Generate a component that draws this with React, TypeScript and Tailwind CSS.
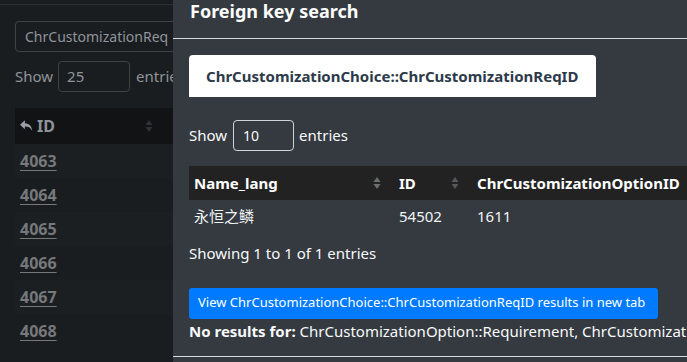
import React from "react";

const font = { fontFamily: '"Noto Sans", "Noto Sans CJK SC", sans-serif' };

function SortIcon({ className = "" }: { className?: string }) {
  return (
    <svg width="8" height="14" viewBox="0 0 8 14" className={className}>
      <path d="M4 1 L7.5 6 L0.5 6 Z" fill="currentColor" />
      <path d="M4 13 L7.5 8 L0.5 8 Z" fill="currentColor" />
    </svg>
  );
}

function ReplyIcon() {
  return (
    <svg width="13" height="12" viewBox="0 0 16 14" className="text-[#9aa0a6]">
      <path d="M6 0 L0 5.5 L6 11 L6 7.5 C10 7.5 13 8.5 15 13 C14.5 7.5 11.5 3.8 6 3.6 Z" fill="currentColor" />
    </svg>
  );
}

export default function App() {
  const rows = ["4063", "4064", "4065", "4066", "4067", "4068"];
  return (
    <div className="relative w-[687px] h-[362px] overflow-hidden bg-[#1a1d20] text-[#9a9fa5]" style={font}>
      {/* background page */}
      <div className="pt-[4px]">
        <div className="border-t border-[#2c3036]" />
        <div className="px-[15px] pt-[16px]">
          <div className="w-[300px] h-[31px] border border-[#3d4248] rounded-[4px] flex items-center px-[9px] text-[14px] text-[#8f949a]">
            ChrCustomizationReq
          </div>
          <div className="flex items-center mt-[9px] text-[15px] text-[#8f949a]">
            <span>Show</span>
            <div className="ml-[5px] w-[72px] h-[31px] border border-[#3d4248] rounded-[4px] flex items-center px-[8px]">25</div>
            <span className="ml-[6px]">entries</span>
          </div>
          <div className="mt-[16px]">
            <div className="h-[36px] bg-[#121315] flex items-center px-[5px]">
              <ReplyIcon />
              <span className="ml-[4px] font-bold text-[16px] text-[#8f949a]">ID</span>
              <SortIcon className="ml-[90px] text-[#2f3338]" />
            </div>
            {rows.map((r, i) => (
              <div key={r} className={`h-[34px] flex items-center px-[5px] ${i % 2 === 0 ? "bg-[#1c1f22]" : "bg-[#1a1d20]"}`}>
                <span className="font-bold text-[16px] text-[#76787b] underline underline-offset-[3px] decoration-[#76787b]">{r}</span>
              </div>
            ))}
            <div className="mt-[10px] text-[15px] text-[#8f949a] leading-[20px]">Showing 676 to 681 of 681 entries</div>
          </div>
        </div>
      </div>

      {/* modal */}
      <div className="absolute left-[173px] top-0 w-[560px] h-[362px] bg-[#343a40] text-[#f8f9fa]">
        <div className="h-[39px] border-b border-[#d6d8db] px-[17px] flex items-start">
          <h5 className="text-[18px] font-bold leading-[20px] mt-[1px] text-white">Foreign key search</h5>
        </div>
        <div className="px-[16px] pt-[16px]">
          <div className="inline-flex items-center h-[42px] w-[407px] px-[17px] bg-white rounded-t-[4px] text-[15px] font-bold text-[#2d3a4a] whitespace-nowrap">
            ChrCustomizationChoice::ChrCustomizationReqID
          </div>
          <div className="flex items-center mt-[23px] text-[15px]">
            <span>Show</span>
            <div className="ml-[6px] w-[61px] h-[31px] border border-[#d0d3d6] rounded-[4px] flex items-center px-[9px] text-[14px]">10</div>
            <span className="ml-[5px]">entries</span>
          </div>
          <div className="mt-[15px]">
            <div className="h-[34px] bg-[#222222] flex items-center text-[15px] font-bold text-white">
              <div className="w-[210px] pl-[5px] flex items-center justify-between pr-[18px]">
                <span>Name_lang</span>
                <SortIcon className="text-[#6c6f73]" />
              </div>
              <div className="w-[78px] flex items-center justify-between pr-[18px]">
                <span>ID</span>
                <SortIcon className="text-[#55585c]" />
              </div>
              <div>ChrCustomizationOptionID</div>
            </div>
            <div className="h-[32px] flex items-center text-[15px] text-[#f1f3f5]">
              <div className="w-[210px] pl-[5px]">永恒之鳞</div>
              <div className="w-[78px]">54502</div>
              <div>1611</div>
            </div>
          </div>
          <div className="mt-[10px] text-[15px]">Showing 1 to 1 of 1 entries</div>
          <div className="mt-[23px] inline-flex items-center h-[31px] w-[469px] px-[9px] bg-[#007bff] rounded-[3px] text-[13px] text-white whitespace-nowrap">
            View ChrCustomizationChoice::ChrCustomizationReqID results in new tab
          </div>
          <div className="mt-[1px] text-[15px] whitespace-nowrap">
            <b>No results for:</b> ChrCustomizationOption::Requirement, ChrCustomizationChoice::Requirement
          </div>
        </div>
        <div className="absolute left-0 right-0 top-[356px] border-t border-[#d6d8db]" />
      </div>
    </div>
  );
}
